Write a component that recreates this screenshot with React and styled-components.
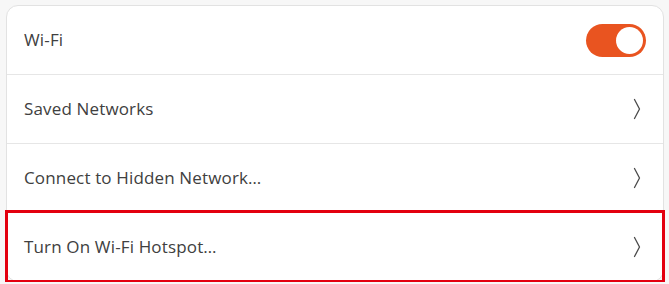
import React from "react";
import styled, { createGlobalStyle } from "styled-components";

const Global = createGlobalStyle`
  html, body { margin: 0; padding: 0; background: #f7f7f7; }
  body { font-family: "Open Sans", "Noto Sans", sans-serif; }
`;

const Page = styled.div`
  padding: 5px 5px 0 6px;
`;

const Card = styled.div`
  background: #ffffff;
  border: 1px solid #e2e2e2;
  border-radius: 12px;
  display: flex;
  flex-direction: column;
`;

const Row = styled.div`
  height: 68px;
  display: flex;
  align-items: center;
  justify-content: space-between;
  padding: 0 22px 0 17px;
  border-top: ${(p) => (p.$first ? "none" : "1px solid #e6e6e6")};
  outline: ${(p) => (p.$highlight ? "3px solid #e3000f" : "none")};
  outline-offset: ${(p) => (p.$highlight ? "-1px" : "0")};
  position: relative;
`;

const Label = styled.span`
  font-size: 17px;
  color: #404040;
  letter-spacing: 0.15px;
  margin-top: -2px;
`;

const Switch = styled.div`
  width: 60px;
  height: 33px;
  border-radius: 17px;
  background: #e95420;
  display: flex;
  align-items: center;
  justify-content: flex-end;
  padding: 0 3px;
  box-sizing: border-box;
  margin-right: -5px;
`;

const Knob = styled.div`
  width: 27px;
  height: 27px;
  border-radius: 50%;
  background: #ffffff;
`;

const Chevron = () => (
  <svg width="8" height="22" viewBox="0 0 8 22" fill="none">
    <path d="M1.5 1.5 L6.5 11 L1.5 20.5" stroke="#4a4a4a" strokeWidth="1.3" strokeLinecap="round" strokeLinejoin="round" />
  </svg>
);

export default function App() {
  return (
    <Page>
      <Global />
      <Card>
        <Row $first>
          <Label>Wi-Fi</Label>
          <Switch>
            <Knob />
          </Switch>
        </Row>
        <Row>
          <Label>Saved Networks</Label>
          <Chevron />
        </Row>
        <Row>
          <Label>Connect to Hidden Network…</Label>
          <Chevron />
        </Row>
        <Row $highlight>
          <Label>Turn On Wi-Fi Hotspot…</Label>
          <Chevron />
        </Row>
      </Card>
    </Page>
  );
}
